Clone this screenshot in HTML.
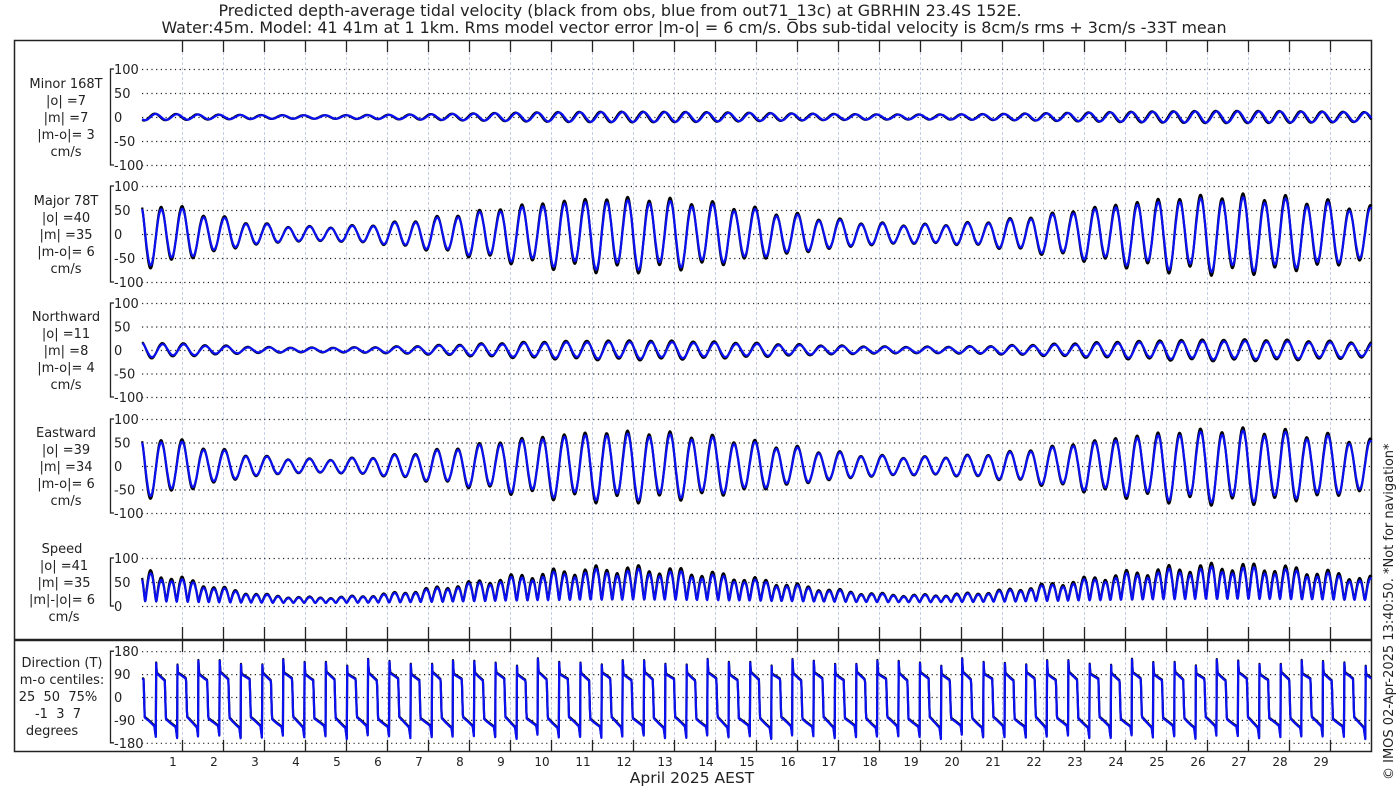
<!DOCTYPE html>
<html><head><meta charset="utf-8"><style>
html,body{margin:0;padding:0;background:#fff;width:1400px;height:800px;overflow:hidden}
svg{display:block;font-family:"DejaVu Sans","Liberation Sans",sans-serif}
</style></head><body>
<svg id="s" width="1400" height="800" viewBox="0 0 1400 800" xmlns="http://www.w3.org/2000/svg">
<text x="620" y="16" font-size="15.9" text-anchor="middle" fill="#222">Predicted depth-average tidal velocity (black from obs, blue from out71_13c) at GBRHIN 23.4S 152E.</text>
<text x="694" y="33" font-size="15.9" text-anchor="middle" fill="#222">Water:45m. Model: 41 41m at 1 1km. Rms model vector error |m-o| = 6 cm/s. Obs sub-tidal velocity is 8cm/s rms + 3cm/s -33T mean</text>
<rect x="14.5" y="40.5" width="1357" height="711" fill="none" stroke="#222" stroke-width="1.5"/>
<line x1="14" y1="640" x2="1372" y2="640" stroke="#222" stroke-width="2.5"/>
<g id="grid"></g>
<g id="data" fill="none" stroke-linejoin="round"></g>
<g font-size="13" fill="#222" text-anchor="middle">
<text x="66" y="88">Minor 168T</text><text x="66" y="105">|o| =7</text><text x="66" y="122">|m| =7</text><text x="66" y="139">|m-o|= 3</text><text x="66" y="156">cm/s</text>
<text x="66" y="205">Major 78T</text><text x="66" y="222">|o| =40</text><text x="66" y="239">|m| =35</text><text x="66" y="256">|m-o|= 6</text><text x="66" y="273">cm/s</text>
<text x="66" y="321">Northward</text><text x="66" y="338">|o| =11</text><text x="66" y="355">|m| =8</text><text x="66" y="372">|m-o|= 4</text><text x="66" y="389">cm/s</text>
<text x="66" y="437">Eastward</text><text x="66" y="454">|o| =39</text><text x="66" y="471">|m| =34</text><text x="66" y="488">|m-o|= 6</text><text x="66" y="505">cm/s</text>
<text x="62" y="553">Speed</text><text x="64" y="570">|o| =41</text><text x="64" y="587">|m| =35</text><text x="62" y="604">|m|-|o|= 6</text><text x="64" y="621">cm/s</text>
<text x="62" y="667">Direction (T)</text><text x="62" y="684">m-o centiles:</text><text x="58" y="701">25&#160; 50&#160; 75%</text><text x="58" y="718">-1&#160; 3&#160; 7</text><text x="52" y="735">degrees</text>
</g>
<text x="692" y="783" font-size="15.5" text-anchor="middle" fill="#222">April 2025 AEST</text>
<text transform="translate(1393,780) rotate(-90)" font-size="13" fill="#222">© IMOS 02-Apr-2025 13:40:50. *Not for navigation*</text>
<g id="ax" font-size="13" fill="#222"></g>
</svg>
<script>
var NS="http://www.w3.org/2000/svg";
function el(p,t,a,txt){var e=document.createElementNS(NS,t);for(var k in a)e.setAttribute(k,a[k]);if(txt!=null)e.textContent=txt;document.getElementById(p).appendChild(e);return e;}
function X(d){return 182+(d-1)*41;}
var P=[
 {z:117,k:0.48,t:[100,50,0,-50,-100]},
 {z:234,k:0.48,t:[100,50,0,-50,-100]},
 {z:350,k:0.47,t:[100,50,0,-50,-100]},
 {z:466,k:0.47,t:[100,50,0,-50,-100]},
 {z:606,k:0.48,t:[100,50,0]},
 {z:697,k:0.2545,t:[180,90,0,-90,-180]}
];
for(var i=0;i<29;i++){var x=X(i+1)+0.5;
 el('grid','line',{x1:x,y1:52,x2:x,y2:740,stroke:'#c9cfe6','stroke-width':1,'stroke-dasharray':'3,2'});
 el('grid','line',{x1:x,y1:40,x2:x,y2:52,stroke:'#222','stroke-width':1.3});
 el('grid','line',{x1:x,y1:740,x2:x,y2:752,stroke:'#222','stroke-width':1.3});
 el('grid','line',{x1:x,y1:627,x2:x,y2:652,stroke:'#222','stroke-width':1.3});
 el('ax','text',{x:X(i+1)-9,y:766,'text-anchor':'middle','font-size':12},String(i+1));
}
P.forEach(function(p){
 var ys=p.t.map(function(v){return p.z-v*p.k;});
 var top=Math.min.apply(null,ys),bot=Math.max.apply(null,ys);
 el('grid','path',{d:'M114 '+top+'H110.5V'+bot+'H114',stroke:'#222',fill:'none','stroke-width':1.3});
 p.t.forEach(function(v){var y=p.z-v*p.k;
  el('grid','line',{x1:142,y1:y+0.5,x2:1372,y2:y+0.5,stroke:'#222','stroke-width':1.2,'stroke-dasharray':'1.2,3.5'});
  el('ax','text',{x:114,y:y+5},String(v));
 });
});
var W=2*Math.PI/0.5175,D=2*Math.PI/1.0758;
function env(d){return 38+26*Math.cos(2*Math.PI*(d-11.7)/14.77)+9*(d/30)+18*Math.exp(-d*d/4);}
function major(d,o){var A=env(d)*(o?1.1:1);return A*(Math.cos(W*d+0.3+(o?0.05:0))+0.12*Math.cos(D*d+1));}
function minor(d,o){var A=(6+3*Math.cos(2*Math.PI*(d-11.7)/14.77)+3*(d/30))*(o?1.1:1);return A*Math.cos(W*d+1.9+(o?0.3:0));}
function dir(d){var p=((W*d+0.3)/(2*Math.PI)+0.25)%1;if(p<0)p+=1;var v;
 if(p<0.04)v=150-p/0.04*60;else if(p<0.42)v=92-(p-0.04)/0.38*25;else if(p<0.47)v=67-(p-0.42)/0.05*150;else if(p<0.93)v=-83-(p-0.47)/0.46*35;else v=-118-(p-0.93)/0.07*45;
 return v+4*Math.sin(d*7.3);}
function series(f,pi,o){var p=P[pi],s='';for(var d=0.03;d<=30.02;d+=0.01){var y=p.z-f(d,o)*p.k;s+=(s?'L':'M')+X(d).toFixed(1)+' '+y.toFixed(1);}return s;}
var fs=[
 function(d,o){return minor(d,o);},
 function(d,o){return major(d,o);},
 function(d,o){return 0.21*major(d,o)-0.85*minor(d,o);},
 function(d,o){return 0.98*major(d,o)+0.2*minor(d,o);},
 function(d,o){var a=major(d,o),b=minor(d,o);return Math.sqrt(a*a+b*b)+3;},
 function(d,o){return dir(d)+(o?3:0);}
];
fs.forEach(function(f,i){
 el('data','path',{d:series(f,i,true),stroke:'#000','stroke-width':2.2});
 el('data','path',{d:series(f,i,false),stroke:'#0a10f0','stroke-width':2.2});
});
</script>
</body></html>
